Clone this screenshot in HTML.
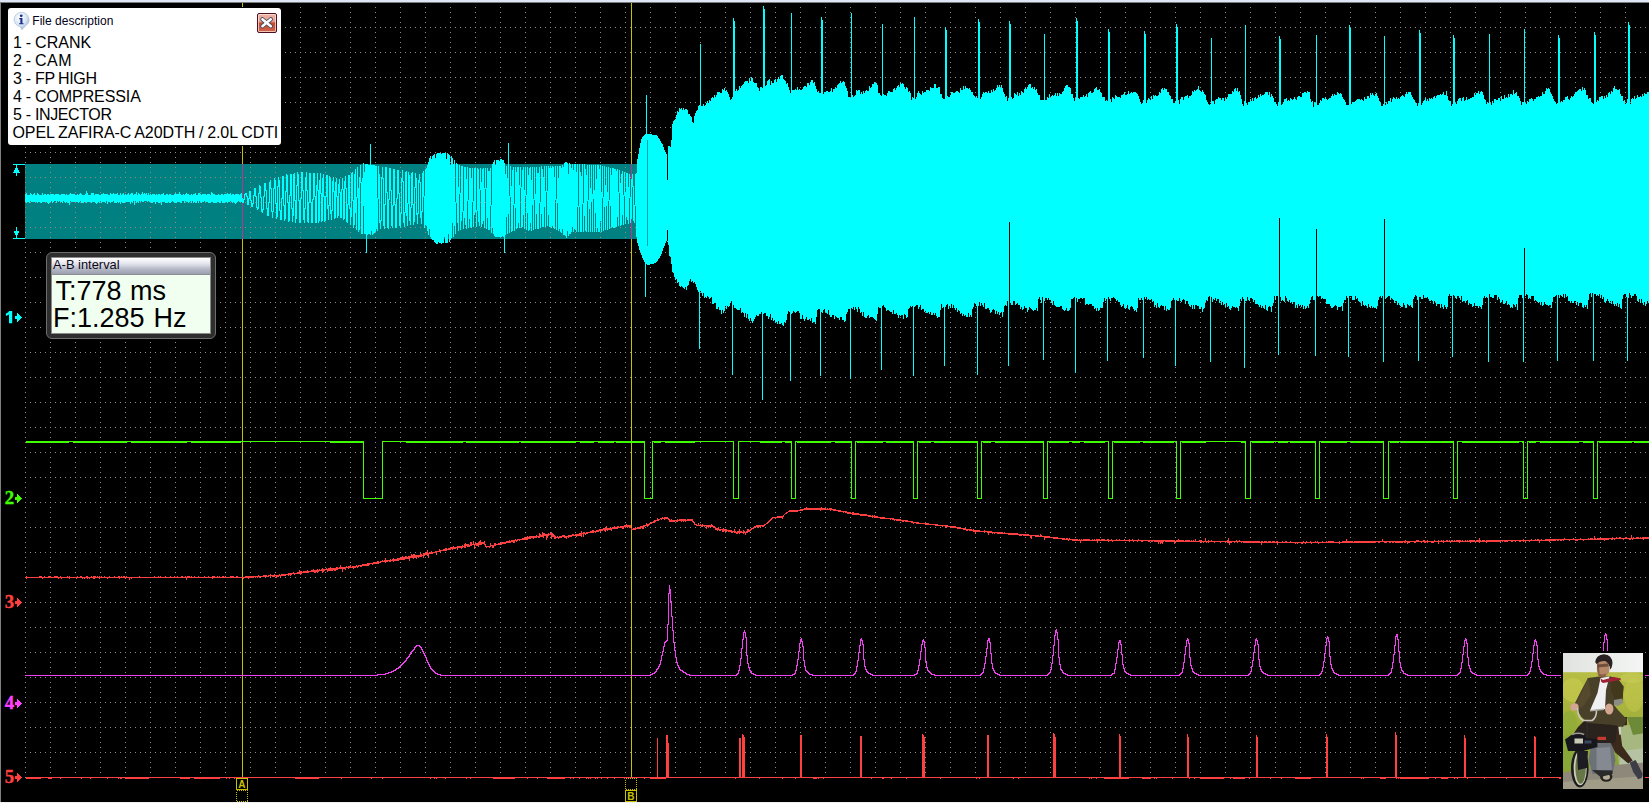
<!DOCTYPE html>
<html><head><meta charset="utf-8"><title>scope</title>
<style>
html,body{margin:0;padding:0;background:#000;}
body{width:1649px;height:803px;overflow:hidden;position:relative;font-family:"Liberation Sans",sans-serif;}
#plot{position:absolute;left:0;top:0;}
#desc{position:absolute;left:8px;top:8px;width:273px;height:137px;background:#fff;border-radius:3px;box-shadow:0 0 0 1px #000;}
#desc .ttl{position:absolute;left:24.3px;top:6px;font-size:12px;line-height:14px;color:#000018;letter-spacing:0.03px;white-space:nowrap;}
#desc .ln{position:absolute;left:5px;font-size:16px;line-height:18px;color:#000;white-space:nowrap;word-spacing:-0.55px;}
#close{position:absolute;left:249px;top:5px;width:18px;height:18px;border:1px solid #4a0f22;border-radius:2px;background:linear-gradient(#eeb4a6 0,#e59a89 46%,#c4492b 48%,#d2664d 100%);box-shadow:inset 0 0 0 1px rgba(255,225,215,.75);}
#ab{position:absolute;left:46px;top:252px;width:170px;height:87px;box-sizing:border-box;border-radius:6px;background:#2e2e2e;border:1px solid #6e6e6e;box-shadow:0 0 0 3px #000;}
#ab .in{position:absolute;left:4px;top:4px;width:160px;height:77px;border:1px solid #8a8a8a;box-sizing:border-box;background:#f0fff0;}
#ab .tb{position:absolute;left:0;top:0;width:158px;height:16px;background:linear-gradient(#ffffff 0,#e4e6ee 35%,#b4b8c6 70%,#9a9eae 100%);border-bottom:1px solid #8c8c94;font-size:12.9px;line-height:14px;color:#100818;text-indent:1px;white-space:nowrap;}
#ab .v{position:absolute;left:3px;font-size:27px;line-height:27px;color:#000;white-space:nowrap;}
</style></head><body>
<svg id="plot" width="1649" height="803" viewBox="0 0 1649 803" shape-rendering="crispEdges">
<defs>
<pattern id="g" x="0" y="2" width="25" height="25" patternUnits="userSpaceOnUse">
<path d="M0 0h1v1h-1zM5 0h1v1h-1zM10 0h1v1h-1zM15 0h1v1h-1zM20 0h1v1h-1zM0 5h1v1h-1zM0 10h1v1h-1zM0 15h1v1h-1zM0 20h1v1h-1z" fill="#8c8c8c"/>
</pattern>
<pattern id="g2" x="0" y="2" width="25" height="25" patternUnits="userSpaceOnUse">
<path d="M0 0h1v1h-1zM5 0h1v1h-1zM10 0h1v1h-1zM15 0h1v1h-1zM20 0h1v1h-1zM0 5h1v1h-1zM0 10h1v1h-1zM0 15h1v1h-1zM0 20h1v1h-1z" fill="#a08878"/>
</pattern>
</defs>
<rect width="1649" height="803" fill="#000"/>
<rect x="25" y="3" width="1624" height="775" fill="url(#g)"/>
<rect x="25" y="164" width="612" height="75" fill="#008080"/>
<rect x="25" y="164" width="612" height="75" fill="url(#g2)"/>
<!-- scale marker -->
<path d="M13 164h12v1h-12zM13 238h12v1h-12zM16 165h1v11h-1zM16 227h1v11h-1z" fill="#00ffff"/>
<path d="M16.5 166l3.5 6.5h-7zM16.5 237l3.5 -6.5h-7z" fill="#00ffff"/>
<!-- cursors -->
<rect x="242" y="3" width="1" height="775" fill="#c8c000"/>
<rect x="631" y="3" width="1" height="775" fill="#c8c000"/>
<rect x="242" y="164" width="1" height="75" fill="#c03090"/>
<rect x="631" y="164" width="1" height="75" fill="#c03090"/>
<!-- ch1 -->
<g transform="translate(0.5,0)"><path d="M25 194v8M26 193v10M27 195v7M28 195v7M29 195v8M30 193v8M31 194v8M32 195v7M33 194v8M34 193v9M35 195v7M36 195v7M37 193v10M38 194v8M39 195v7M40 195v8M41 195v8M42 193v9M43 195v7M44 194v8M45 194v8M46 195v7M47 194v9M48 194v10M49 195v8M50 194v8M51 194v7M52 194v9M53 194v8M54 195v6M55 194v7M56 194v9M57 194v7M58 194v8M59 195v6M60 195v7M61 194v8M62 194v9M63 194v7M64 194v8M65 195v8M66 194v8M67 195v8M68 195v8M69 194v11M70 193v8M71 194v8M72 194v8M73 194v8M74 194v8M75 195v7M76 195v7M77 194v8M78 195v8M79 194v8M80 193v8M81 194v9M82 195v8M83 195v8M84 195v7M85 194v8M86 191v12M87 193v9M88 195v7M89 195v7M90 195v7M91 193v10M92 193v9M93 193v9M94 195v7M95 194v9M96 194v10M97 194v9M98 194v8M99 195v8M100 195v6M101 194v9M102 194v8M103 193v9M104 194v8M105 194v9M106 194v7M107 194v10M108 195v7M109 195v7M110 193v10M111 194v8M112 194v8M113 193v8M114 194v9M115 194v9M116 194v9M117 193v9M118 195v8M119 195v7M120 193v11M121 195v7M122 194v9M123 193v10M124 195v8M125 194v8M126 195v7M127 194v8M128 193v9M129 195v7M130 194v10M131 193v9M132 193v10M133 195v6M134 194v11M135 194v7M136 192v11M137 195v7M138 193v10M139 194v7M140 195v7M141 194v7M142 192v10M143 194v8M144 193v8M145 194v7M146 193v8M147 195v7M148 193v8M149 195v7M150 194v8M151 195v8M152 194v9M153 194v8M154 194v8M155 195v9M156 194v8M157 195v7M158 194v9M159 194v9M160 195v7M161 194v11M162 194v8M163 193v9M164 195v7M165 195v8M166 194v9M167 194v9M168 195v7M169 194v9M170 194v9M171 195v7M172 195v6M173 195v7M174 194v9M175 193v10M176 194v9M177 194v8M178 194v8M179 192v10M180 194v9M181 195v8M182 195v6M183 194v7M184 195v8M185 194v7M186 193v9M187 194v8M188 194v9M189 195v7M190 195v6M191 194v9M192 195v6M193 194v9M194 194v8M195 193v10M196 195v8M197 195v6M198 193v10M199 193v8M200 194v8M201 195v8M202 194v8M203 194v8M204 194v7M205 194v8M206 195v7M207 194v8M208 194v9M209 194v9M210 195v8M211 192v10M212 193v9M213 194v9M214 194v9M215 195v8M216 195v8M217 195v7M218 194v8M219 195v8M220 195v8M221 194v7M222 194v9M223 195v8M224 194v9M225 194v8M226 194v8M227 193v10M228 194v8M229 194v8M230 193v8M231 195v7M232 194v9M233 194v8M234 195v8M235 194v10M236 194v9M237 194v8M238 194v7M239 195v7M240 194v8M241 193v9M242 198v5M243 199v4M244 194v6M245 193v2M246 193v4M247 196v9M248 198v7M249 191v8M250 191v10M251 200v7M252 203v4M253 195v9M254 188v8M255 188v9M256 196v12M257 207v3M258 193v16M259 185v9M260 186v12M261 197v15M262 209v4M263 196v14M264 183v14M265 183v8M266 190v19M267 208v8M268 202v14M269 182v21M270 180v9M271 188v24M272 211v7M273 188v24M274 178v11M275 180v24M276 203v16M277 186v31M278 177v10M279 180v31M280 210v10M281 198v22M282 176v23M283 176v30M284 205v16M285 191v28M286 174v18M287 175v28M288 202v20M289 195v26M290 174v22M291 174v35M292 208v14M293 174v42M294 173v28M295 200v23M296 185v34M297 172v14M298 174v27M299 200v23M300 198v25M301 172v27M302 172v19M303 190v30M304 208v15M305 177v32M306 172v19M307 190v32M308 202v21M309 173v30M310 173v30M311 202v21M312 199v24M313 173v27M314 173v24M315 196v27M316 185v38M317 173v18M318 190v33M319 180v41M320 173v21M321 193v29M322 178v43M323 174v23M324 196v26M325 196v25M326 175v22M327 175v34M328 205v15M329 176v30M330 178v36M331 210v10M332 181v30M333 177v15M334 191v28M335 182v36M336 178v19M337 196v22M338 184v32M339 179v14M340 192v26M341 189v29M342 178v12M343 189v31M344 181v38M345 176v13M346 188v34M347 204v19M348 175v30M349 175v34M350 208v17M351 173v44M352 172v29M353 200v28M354 174v51M355 169v44M356 197v33M357 167v31M358 188v44M359 177v53M360 165v18M361 182v52M362 178v56M363 163v43M364 172v62M365 164v70M366 164v89M367 164v71M368 165v69M369 165v69M370 144v91M371 165v66M372 165v70M373 165v69M374 165v68M375 166v66M376 166v63M377 198v33M378 166v33M379 174v49M380 220v9M381 177v44M382 167v12M383 178v48M384 204v25M385 167v38M386 167v26M387 192v36M388 199v30M389 168v32M390 168v23M391 190v36M392 205v23M393 169v37M394 169v36M395 204v24M396 198v30M397 170v29M398 170v24M399 193v33M400 213v15M401 178v36M402 170v12M403 181v42M404 212v15M405 172v41M406 171v45M407 203v23M408 172v32M409 175v46M410 207v18M411 173v35M412 172v33M413 204v21M414 187v35M415 173v15M416 178v37M417 213v11M418 180v34M419 174v9M420 182v36M421 211v13M422 173v39M423 171v26M424 196v32M425 169v56M426 168v58M427 165v66M428 162v73M429 158v71M430 156v81M431 159v80M432 156v84M433 155v85M434 154v88M435 158v85M436 154v90M437 153v91M438 153v89M439 153v90M440 153v90M441 154v90M442 153v90M443 153v90M444 153v84M445 153v90M446 159v84M447 153v90M448 154v80M449 155v87M450 165v75M451 156v82M452 158v65M453 164v73M454 160v66M455 202v32M456 163v40M457 164v59M458 187v44M459 165v29M460 193v37M461 166v55M462 166v46M463 211v18M464 167v51M465 167v58M466 179v50M467 167v34M468 200v28M469 168v51M470 168v59M471 178v50M472 168v34M473 201v26M474 168v47M475 168v44M476 210v17M477 168v43M478 169v53M479 189v37M480 168v22M481 182v45M482 169v55M483 168v53M484 188v40M485 168v21M486 188v41M487 168v50M488 171v59M489 171v59M490 168v38M491 205v28M492 164v64M493 162v72M494 160v76M495 165v72M496 160v77M497 160v77M498 160v77M499 161v76M500 159v78M501 159v78M502 160v76M503 160v77M504 163v90M505 174v61M506 166v51M507 178v56M508 143v71M509 196v37M510 166v31M511 186v46M512 170v61M513 167v38M514 204v27M515 167v41M516 172v57M517 167v61M518 167v56M519 185v43M520 167v21M521 187v41M522 170v57M523 167v48M524 190v39M525 167v29M526 195v35M527 167v46M528 175v56M529 168v62M530 167v56M531 180v51M532 167v38M533 199v31M534 167v33M535 194v35M536 167v47M537 173v56M538 173v56M539 167v36M540 202v26M541 166v48M542 169v58M543 177v50M544 166v41M545 191v36M546 166v26M547 191v35M548 166v49M549 168v59M550 166v61M551 168v60M552 166v60M553 167v61M554 177v52M555 166v34M556 199v31M557 166v37M558 178v53M559 166v63M560 166v66M561 168v65M562 165v64M563 167v68M564 163v72M565 162v74M566 162v76M567 163v68M568 174v62M569 163v71M570 164v70M571 168v64M572 164v63M573 170v62M574 164v65M575 164v66M576 172v60M577 164v43M578 206v26M579 164v43M580 172v60M581 176v56M582 164v40M583 203v29M584 164v52M585 169v62M586 175v57M587 165v36M588 200v32M589 165v44M590 188v44M591 165v37M592 194v38M593 165v34M594 190v42M595 165v48M596 179v53M597 165v63M598 165v67M599 169v63M600 165v56M601 192v40M602 166v32M603 197v34M604 166v41M605 185v45M606 167v39M607 192v38M608 167v34M609 200v29M610 168v38M611 175v53M612 168v59M613 168v60M614 169v59M615 169v58M616 171v56M617 169v48M618 192v34M619 170v23M620 183v43M621 174v51M622 171v44M623 195v30M624 172v24M625 192v32M626 173v44M627 173v47M628 187v37M629 174v24M630 197v26M631 179v40M632 174v13M633 186v35M634 205v18M635 174v32M636 173v64M637 159v84M638 154v92M639 148v102M640 143v109M641 139v116M642 137v121M643 136v124M644 135v127M645 134v163M646 95v169M647 134v131M648 134v131M649 134v131M650 134v130M651 134v130M652 135v129M653 135v129M654 135v128M655 135v128M656 135v127M657 136v125M658 138v121M659 139v119M660 141v115M661 143v111M662 144v107M663 147v101M664 150v96M665 152v91M666 154v87M667 148v94M668 146v99M669 146v110M670 147v110M671 140v124M672 124v148M673 121v152M674 120v157M675 119v161M676 115v164M677 111v172M678 112v170M679 108v178M680 109v178M681 108v178M682 110v177M683 108v180M684 110v179M685 109v178M686 109v181M687 110v176M688 114v171M689 114v167M690 116v163M691 117v165M692 122v159M693 123v160M694 116v166M695 113v171M696 111v176M697 110v180M698 106v186M699 105v244M700 44v247M701 106v187M702 106v190M703 104v189M704 106v192M705 105v192M706 103v195M707 101v195M708 103v194M709 100v199M710 101v197M711 98v199M712 97v207M713 98v206M714 95v208M715 97v206M716 95v214M717 92v217M718 92v215M719 92v218M720 93v217M721 93v221M722 89v221M723 90v223M724 88v223M725 91v215M726 90v219M727 92v214M728 94v213M729 97v209M730 100v203M731 99v202M732 97v278M733 18v287M734 21v287M735 91v217M736 89v220M737 91v219M738 90v220M739 86v224M740 88v220M741 86v227M742 85v227M743 84v229M744 82v235M745 81v232M746 81v237M747 81v233M748 83v236M749 78v243M750 81v237M751 77v244M752 78v245M753 82v239M754 83v236M755 83v234M756 83v232M757 87v229M758 88v228M759 91v223M760 87v227M761 87v225M762 88v312M763 6v308M764 9v304M765 86v227M766 85v231M767 81v235M768 80v239M769 79v238M770 85v229M771 81v239M772 83v235M773 83v238M774 80v240M775 79v244M776 82v240M777 79v245M778 77v244M779 79v245M780 76v248M781 75v248M782 75v250M783 79v247M784 80v242M785 81v242M786 84v236M787 83v231M788 87v224M789 90v222M790 93v288M791 13v301M792 90v223M793 90v221M794 90v222M795 89v224M796 90v222M797 87v224M798 90v221M799 89v224M800 90v229M801 90v229M802 89v226M803 87v232M804 86v235M805 86v233M806 87v230M807 83v237M808 83v237M809 85v234M810 82v239M811 80v238M812 80v243M813 83v239M814 82v240M815 86v238M816 89v228M817 92v218M818 91v218M819 93v216M820 93v283M821 17v295M822 20v293M823 94v216M824 92v217M825 92v220M826 91v222M827 91v223M828 92v218M829 92v223M830 91v226M831 88v229M832 92v223M833 89v226M834 89v230M835 87v229M836 88v229M837 85v233M838 84v234M839 83v237M840 81v236M841 83v234M842 82v238M843 81v239M844 82v240M845 86v235M846 88v226M847 91v221M848 97v212M849 97v212M850 98v281M851 13v295M852 95v214M853 97v210M854 96v214M855 95v212M856 90v219M857 91v221M858 90v217M859 90v219M860 94v219M861 92v220M862 94v222M863 91v221M864 93v224M865 91v227M866 90v228M867 91v225M868 91v224M869 86v232M870 88v229M871 87v230M872 84v233M873 84v234M874 82v237M875 83v237M876 83v238M877 85v229M878 93v214M879 93v215M880 95v213M881 96v274M882 24v282M883 94v211M884 95v212M885 95v213M886 96v215M887 93v217M888 91v219M889 91v220M890 92v220M891 92v220M892 92v222M893 89v221M894 88v226M895 90v224M896 88v225M897 86v229M898 85v233M899 87v228M900 83v233M901 84v231M902 83v232M903 84v235M904 87v227M905 89v226M906 87v231M907 88v229M908 92v217M909 91v217M910 93v213M911 100v207M912 97v209M913 98v278M914 17v290M915 99v207M916 97v208M917 93v212M918 91v218M919 93v214M920 94v211M921 95v215M922 91v218M923 93v216M924 92v220M925 92v219M926 90v223M927 90v223M928 90v222M929 91v223M930 87v225M931 88v227M932 88v227M933 88v225M934 84v231M935 84v229M936 88v228M937 88v230M938 87v230M939 87v230M940 94v216M941 94v210M942 98v210M943 99v208M944 99v267M945 27v280M946 30v275M947 96v208M948 97v212M949 97v209M950 95v213M951 92v212M952 92v216M953 93v212M954 93v215M955 92v218M956 91v217M957 91v221M958 92v218M959 93v218M960 88v226M961 90v223M962 90v226M963 86v228M964 89v227M965 86v229M966 88v229M967 88v229M968 89v224M969 88v229M970 90v225M971 92v225M972 92v217M973 95v212M974 96v207M975 98v206M976 96v210M977 98v277M978 19v287M979 22v280M980 99v207M981 97v206M982 94v211M983 92v215M984 93v210M985 92v217M986 92v217M987 93v215M988 91v217M989 93v217M990 93v220M991 90v222M992 92v218M993 89v220M994 91v219M995 90v224M996 88v223M997 85v229M998 87v225M999 85v230M1000 88v225M1001 85v227M1002 88v229M1003 92v220M1004 94v212M1005 97v208M1006 96v210M1007 101v200M1008 98v268M1009 21v280M1010 24v279M1011 97v208M1012 99v206M1013 98v203M1014 93v208M1015 94v211M1016 95v209M1017 92v211M1018 96v209M1019 93v212M1020 95v214M1021 91v216M1022 92v218M1023 93v216M1024 89v217M1025 88v220M1026 89v219M1027 87v225M1028 85v225M1029 84v223M1030 84v224M1031 88v221M1032 87v223M1033 89v222M1034 87v223M1035 90v220M1036 89v219M1037 93v218M1038 95v204M1039 95v202M1040 100v200M1041 100v203M1042 100v197M1043 100v260M1044 34v267M1045 100v198M1046 100v198M1047 97v203M1048 98v200M1049 94v206M1050 98v202M1051 96v207M1052 95v210M1053 96v205M1054 95v210M1055 93v213M1056 96v211M1057 93v214M1058 96v211M1059 93v214M1060 94v212M1061 94v212M1062 92v217M1063 91v219M1064 88v223M1065 86v224M1066 85v223M1067 85v226M1068 87v224M1069 87v223M1070 88v220M1071 94v205M1072 94v205M1073 98v200M1074 101v196M1075 98v275M1076 18v280M1077 21v281M1078 98v201M1079 99v200M1080 97v201M1081 97v201M1082 97v202M1083 95v203M1084 97v201M1085 96v209M1086 94v210M1087 97v207M1088 93v212M1089 92v212M1090 91v213M1091 93v211M1092 93v213M1093 92v214M1094 89v220M1095 88v220M1096 87v224M1097 90v218M1098 90v221M1099 89v221M1100 92v215M1101 93v215M1102 97v211M1103 97v205M1104 97v201M1105 101v200M1106 100v199M1107 101v260M1108 29v268M1109 32v267M1110 99v202M1111 102v196M1112 97v201M1113 98v199M1114 99v199M1115 95v204M1116 96v205M1117 97v203M1118 97v205M1119 97v205M1120 98v207M1121 95v212M1122 95v211M1123 94v210M1124 92v216M1125 95v214M1126 95v213M1127 94v211M1128 91v218M1129 94v216M1130 93v214M1131 92v214M1132 93v214M1133 92v217M1134 92v219M1135 92v218M1136 93v219M1137 94v214M1138 96v202M1139 99v201M1140 102v198M1141 104v194M1142 103v197M1143 100v258M1144 31v266M1145 34v265M1146 103v194M1147 100v200M1148 98v201M1149 99v201M1150 100v200M1151 96v203M1152 99v203M1153 95v206M1154 96v211M1155 95v210M1156 96v212M1157 96v207M1158 95v212M1159 92v216M1160 93v213M1161 89v216M1162 88v218M1163 90v216M1164 88v222M1165 89v217M1166 89v222M1167 92v217M1168 92v218M1169 95v215M1170 96v212M1171 99v202M1172 99v201M1173 103v195M1174 103v197M1175 101v265M1176 24v276M1177 27v274M1178 100v201M1179 104v194M1180 99v202M1181 97v205M1182 97v203M1183 100v199M1184 97v203M1185 96v208M1186 96v205M1187 95v206M1188 98v206M1189 96v210M1190 96v211M1191 95v210M1192 91v218M1193 92v213M1194 90v219M1195 91v214M1196 90v215M1197 89v217M1198 86v220M1199 90v219M1200 91v218M1201 92v215M1202 90v222M1203 92v217M1204 94v214M1205 95v207M1206 100v200M1207 102v199M1208 104v193M1209 105v191M1210 104v258M1211 38v259M1212 101v201M1213 101v198M1214 104v196M1215 100v198M1216 99v202M1217 99v200M1218 97v202M1219 98v205M1220 98v203M1221 100v205M1222 98v204M1223 98v207M1224 101v203M1225 98v209M1226 99v204M1227 97v210M1228 94v212M1229 94v215M1230 94v216M1231 94v214M1232 91v215M1233 92v215M1234 89v218M1235 88v220M1236 91v216M1237 88v220M1238 92v219M1239 91v215M1240 95v204M1241 99v202M1242 104v193M1243 106v193M1244 101v267M1245 25v276M1246 103v198M1247 105v192M1248 102v198M1249 102v199M1250 99v199M1251 101v197M1252 98v201M1253 101v201M1254 98v202M1255 97v207M1256 99v205M1257 98v206M1258 95v210M1259 97v210M1260 94v211M1261 96v212M1262 95v211M1263 95v213M1264 94v215M1265 92v213M1266 92v218M1267 92v219M1268 95v212M1269 92v214M1270 97v210M1271 94v218M1272 96v210M1273 98v205M1274 102v194M1275 102v198M1276 104v192M1277 106v190M1278 102v253M1279 36v260M1280 39v258M1281 105v196M1282 104v196M1283 102v199M1284 99v203M1285 99v197M1286 98v200M1287 101v200M1288 100v202M1289 101v199M1290 98v205M1291 99v203M1292 100v204M1293 99v203M1294 97v205M1295 99v209M1296 100v205M1297 97v211M1298 96v208M1299 96v210M1300 97v208M1301 97v210M1302 93v212M1303 93v216M1304 92v214M1305 92v217M1306 93v215M1307 91v215M1308 92v216M1309 92v212M1310 99v201M1311 102v195M1312 101v195M1313 107v193M1314 102v198M1315 103v253M1316 35v262M1317 105v191M1318 105v192M1319 103v193M1320 100v196M1321 101v198M1322 98v200M1323 98v201M1324 99v200M1325 97v202M1326 99v205M1327 100v204M1328 99v205M1329 98v206M1330 98v208M1331 96v212M1332 94v214M1333 96v211M1334 94v212M1335 95v210M1336 95v211M1337 92v218M1338 93v214M1339 94v213M1340 93v214M1341 94v212M1342 97v214M1343 99v204M1344 100v200M1345 102v198M1346 105v191M1347 105v193M1348 105v252M1349 25v271M1350 28v268M1351 104v192M1352 102v198M1353 102v198M1354 102v198M1355 101v195M1356 100v199M1357 99v199M1358 99v202M1359 99v203M1360 100v202M1361 99v207M1362 100v201M1363 101v204M1364 97v209M1365 99v206M1366 99v207M1367 96v212M1368 96v208M1369 98v209M1370 93v215M1371 95v211M1372 93v215M1373 95v212M1374 96v212M1375 94v214M1376 93v216M1377 96v210M1378 98v202M1379 101v196M1380 103v193M1381 106v192M1382 106v190M1383 104v258M1384 36v261M1385 105v194M1386 102v196M1387 104v193M1388 101v195M1389 101v195M1390 98v202M1391 102v196M1392 99v200M1393 97v203M1394 98v205M1395 99v202M1396 97v204M1397 99v206M1398 98v205M1399 99v206M1400 97v209M1401 96v211M1402 95v212M1403 96v207M1404 97v208M1405 94v214M1406 92v216M1407 94v210M1408 92v213M1409 92v214M1410 92v213M1411 95v212M1412 97v211M1413 99v200M1414 100v197M1415 103v192M1416 103v193M1417 106v194M1418 103v258M1419 30v267M1420 33v264M1421 105v194M1422 103v196M1423 101v194M1424 100v198M1425 98v199M1426 101v197M1427 99v198M1428 101v198M1429 98v203M1430 99v202M1431 98v202M1432 99v202M1433 97v207M1434 96v205M1435 98v204M1436 96v210M1437 95v209M1438 95v209M1439 95v209M1440 94v214M1441 95v209M1442 94v213M1443 92v217M1444 95v210M1445 95v212M1446 91v218M1447 96v211M1448 100v196M1449 101v193M1450 101v195M1451 106v190M1452 104v253M1453 35v260M1454 38v258M1455 103v195M1456 104v195M1457 101v195M1458 99v197M1459 98v200M1460 98v202M1461 101v195M1462 98v204M1463 97v204M1464 101v200M1465 100v203M1466 97v204M1467 100v200M1468 99v206M1469 99v204M1470 98v206M1471 98v206M1472 97v210M1473 97v209M1474 93v210M1475 95v211M1476 93v213M1477 93v213M1478 91v217M1479 94v212M1480 92v215M1481 91v218M1482 92v213M1483 95v203M1484 99v197M1485 100v198M1486 104v193M1487 102v196M1488 103v259M1489 34v260M1490 103v194M1491 105v192M1492 101v197M1493 103v195M1494 99v196M1495 99v196M1496 100v195M1497 100v200M1498 98v199M1499 98v201M1500 101v202M1501 96v206M1502 99v201M1503 99v205M1504 95v209M1505 98v205M1506 97v204M1507 98v207M1508 94v210M1509 97v208M1510 94v214M1511 94v213M1512 95v213M1513 90v214M1514 94v211M1515 93v214M1516 92v212M1517 96v214M1518 96v202M1519 98v197M1520 101v194M1521 105v190M1522 102v196M1523 102v260M1524 29v267M1525 103v193M1526 104v190M1527 101v194M1528 102v197M1529 99v199M1530 99v200M1531 98v198M1532 99v197M1533 101v195M1534 99v202M1535 99v201M1536 97v204M1537 97v205M1538 96v207M1539 97v205M1540 96v209M1541 96v206M1542 92v214M1543 94v211M1544 94v208M1545 91v213M1546 88v217M1547 89v216M1548 88v218M1549 89v216M1550 93v212M1551 94v214M1552 96v206M1553 99v198M1554 101v196M1555 102v194M1556 104v191M1557 103v258M1558 35v260M1559 38v260M1560 103v192M1561 101v195M1562 102v195M1563 100v194M1564 100v198M1565 97v197M1566 97v200M1567 96v200M1568 99v202M1569 100v201M1570 98v205M1571 96v205M1572 97v206M1573 96v207M1574 94v207M1575 92v209M1576 92v213M1577 91v211M1578 90v216M1579 89v214M1580 89v213M1581 91v212M1582 87v220M1583 90v218M1584 88v217M1585 90v217M1586 95v210M1587 95v214M1588 99v201M1589 98v196M1590 98v195M1591 102v195M1592 103v190M1593 104v257M1594 32v262M1595 35v259M1596 102v194M1597 100v195M1598 101v195M1599 97v197M1600 97v201M1601 96v199M1602 96v203M1603 99v198M1604 96v206M1605 98v205M1606 95v206M1607 97v202M1608 93v208M1609 92v211M1610 94v207M1611 91v213M1612 92v209M1613 88v216M1614 86v220M1615 89v215M1616 89v217M1617 90v213M1618 90v217M1619 89v215M1620 94v214M1621 96v213M1622 96v203M1623 101v194M1624 100v194M1625 104v190M1626 103v194M1627 99v262M1628 22v276M1629 25v268M1630 104v191M1631 99v199M1632 98v198M1633 99v197M1634 96v198M1635 99v195M1636 98v198M1637 95v206M1638 97v205M1639 97v202M1640 96v207M1641 97v202M1642 94v209M1643 96v209M1644 93v209M1645 94v212M1646 94v210M1647 92v209M1648 92v211" stroke="#00ffff" stroke-width="1" fill="none"/>
<path d="M667 230V241M1009 222V305M1279 218V300M1316 229V300M1384 219V300M1524 248V300M667 147V180" stroke="#000" stroke-width="1" fill="none"/><path d="M647 140V246" stroke="#00a4a4" stroke-width="1" fill="none"/></g>
<g transform="translate(0.5,0.5)" fill="none" stroke-width="1">
<path d="M25 441H363V498H382V441H644V498H652V441H733V498H738V441H791V498H795V441H851V498H855V441H913V498H917V441H977V498H981V441H1043V498H1047V441H1108V498H1112V441H1176V498H1180V441H1245V498H1250V441H1315V498H1319V441H1383V498H1388V441H1453V498H1457V441H1523V498H1527V441H1593V498H1597V441H1649M25 442H68M72 442H126M130 442H186M190 442H240M329 442H362M405 442H462M465 442H518M520 442H575M579 442H593M597 442H613M615 442H643M653 442H660M664 442H694M759 442H781M784 442H790M796 442H830M834 442H850M856 442H882M885 442H912M918 442H930M933 442H976M982 442H990M994 442H1042M1048 442H1068M1071 442H1079M1083 442H1104M1113 442H1139M1142 442H1173M1175 442H1175M1181 442H1205M1240 442H1244M1251 442H1273M1277 442H1287M1289 442H1314M1320 442H1346M1350 442H1382M1389 442H1398M1400 442H1452M1458 442H1458M1461 442H1518M1521 442H1522M1528 442H1535M1539 442H1578M1582 442H1592M1598 442H1631M1633 442H1648" stroke="#40ff00"/>
<path d="M25 777H1649M657 737V777M666 734V777M667 734V777M668 742V777M739 737V777M740 737V777M742 733V777M743 734V777M744 736V777M800 734V777M801 734V777M860 735V777M861 735V777M922 733V777M923 734V777M924 736V777M987 734V777M988 734V777M1053 732V777M1054 733V777M1055 736V777M1119 733V777M1120 735V777M1187 733V777M1188 736V777M1256 734V777M1257 736V777M1326 733V777M1327 736V777M1395 731V777M1396 734V777M1464 734V777M1465 737V777M1534 735V777M1535 736V777M1605 734V777M25 778H39M47 778H51M124 778H148M179 778H189M193 778H219M294 778H318M492 778H514M546 778H564M649 778H665M812 778H816M1103 778H1128M1141 778H1150M1199 778H1223M1232 778H1244M1295 778H1310M1379 778H1383M1399 778H1428M1440 778H1447M1558 778H1579M38 777v1.2M40 777v1.2M60 777v1.2M81 777v1.2M90 777v1.2M107 777v1.2M118 777v1.2M120 777v1.2M121 777v1.2M139 777v1.2M141 777v1.2M201 777v1.2M212 777v1.2M213 777v1.2M226 777v1.2M229 777v1.2M234 777v1.2M296 777v1.2M341 777v1.2M371 777v1.2M382 777v1.2M430 777v1.2M434 777v1.2M436 777v1.2M445 777v1.2M466 777v1.2M470 777v1.2M499 777v1.2M527 777v1.2M537 777v1.2M552 777v1.2M553 777v1.2M556 777v1.2M558 777v1.2M570 777v1.2M573 777v1.2M579 777v1.2M586 777v1.2M588 777v1.2M590 777v1.2M595 777v1.2M597 777v1.2M601 777v1.2M607 777v1.2M614 777v1.2M624 777v1.2M644 777v1.2M735 777v1.2M759 777v1.2M782 777v1.2M795 777v1.2M818 777v1.2M823 777v1.2M871 777v1.2M882 777v1.2M883 777v1.2M891 777v1.2M906 777v1.2M940 777v1.2M976 777v1.2M979 777v1.2M1013 777v1.2M1018 777v1.2M1089 777v1.2M1091 777v1.2M1096 777v1.2M1123 777v1.2M1154 777v1.2M1156 777v1.2M1172 777v1.2M1189 777v1.2M1194 777v1.2M1210 777v1.2M1230 777v1.2M1249 777v1.2M1270 777v1.2M1281 777v1.2M1295 777v1.2M1298 777v1.2M1299 777v1.2M1361 777v1.2M1363 777v1.2M1384 777v1.2M1385 777v1.2M1396 777v1.2M1398 777v1.2M1406 777v1.2M1423 777v1.2M1435 777v1.2M1445 777v1.2M1454 777v1.2M1457 777v1.2M1467 777v1.2M1484 777v1.2M1506 777v1.2M1542 777v1.2M1569 777v1.2M1572 777v1.2M1574 777v1.2" stroke="#ff4040"/>
</g>
<g transform="translate(0.5,0)"><path d="M25 577V578M26 576V579M27 577V578M28 577V578M29 577V578M30 577V578M31 577V578M32 577V578M33 577V578M34 577V578M35 577V578M36 577V578M37 577V578M38 577V578M39 576V578M40 576V578M41 576V578M42 577V579M43 577V578M44 576V578M45 577V578M46 577V578M47 577V578M48 576V578M49 576V578M50 576V578M51 577V578M52 577V578M53 577V578M54 576V578M55 576V578M56 576V578M57 576V578M58 577V579M59 577V578M60 576V578M61 577V579M62 577V578M63 577V578M64 577V578M65 577V578M66 577V578M67 576V578M68 577V578M69 576V579M70 577V578M71 577V578M72 577V578M73 577V578M74 577V578M75 577V578M76 577V579M77 576V578M78 577V578M79 577V578M80 576V578M81 576V578M82 577V579M83 577V578M84 577V579M85 577V578M86 576V578M87 576V579M88 577V578M89 577V579M90 577V578M91 576V578M92 577V578M93 576V579M94 576V579M95 576V578M96 577V578M97 576V578M98 577V578M99 576V579M100 577V578M101 576V578M102 577V578M103 577V578M104 576V578M105 577V578M106 577V578M107 577V579M108 577V578M109 576V578M110 577V578M111 577V578M112 577V578M113 577V578M114 576V578M115 577V578M116 577V578M117 577V578M118 576V578M119 576V579M120 577V578M121 576V578M122 577V578M123 576V578M124 576V578M125 577V579M126 576V578M127 577V578M128 577V578M129 577V580M130 577V578M131 577V579M132 577V578M133 577V578M134 577V578M135 577V578M136 577V578M137 577V578M138 577V578M139 576V578M140 577V578M141 577V578M142 577V578M143 577V578M144 577V578M145 577V578M146 577V578M147 577V578M148 577V578M149 577V578M150 577V578M151 577V578M152 577V578M153 577V578M154 576V578M155 577V578M156 577V578M157 577V578M158 576V578M159 577V578M160 576V578M161 577V578M162 577V578M163 577V578M164 577V578M165 576V578M166 577V578M167 577V578M168 577V578M169 577V578M170 576V578M171 577V578M172 577V578M173 577V578M174 576V578M175 577V578M176 577V578M177 576V578M178 577V578M179 577V578M180 577V578M181 576V578M182 576V578M183 577V578M184 577V578M185 576V578M186 577V580M187 576V578M188 576V578M189 576V578M190 577V578M191 576V578M192 577V578M193 577V578M194 576V578M195 577V578M196 577V578M197 577V578M198 576V578M199 577V578M200 577V578M201 577V578M202 577V578M203 577V578M204 576V578M205 577V578M206 577V578M207 577V578M208 576V578M209 577V578M210 577V578M211 577V578M212 576V579M213 576V578M214 576V578M215 577V578M216 577V578M217 576V578M218 577V578M219 576V578M220 577V578M221 577V578M222 576V578M223 576V578M224 577V578M225 576V578M226 577V578M227 577V578M228 577V578M229 577V578M230 576V578M231 576V578M232 576V578M233 576V578M234 577V578M235 577V578M236 576V578M237 576V578M238 577V578M239 577V578M240 577V578M241 577V578M242 577V578M243 577V579M244 577V578M245 576V578M246 576V578M247 576V578M248 576V579M249 576V578M250 576V578M251 576V578M252 576V578M253 576V578M254 576V577M255 576V578M256 576V577M257 576V578M258 575V577M259 576V578M260 576V577M261 576V577M262 576V577M263 575V577M264 575V577M265 575V577M266 575V577M267 576V577M268 575V577M269 575V576M270 574V577M271 575V576M272 575V577M273 575V577M274 574V577M275 575V576M276 575V578M277 575V577M278 575V577M279 574V576M280 575V577M281 574V576M282 574V576M283 574V576M284 574V576M285 574V576M286 574V575M287 574V575M288 573V576M289 573V575M290 573V576M291 573V575M292 573V574M293 572V574M294 573V575M295 573V574M296 573V574M297 572V574M298 572V574M299 570V574M300 571V575M301 571V574M302 572V573M303 571V573M304 571V573M305 571V573M306 571V573M307 570V573M308 571V573M309 571V572M310 571V572M311 570V572M312 570V572M313 569V572M314 570V573M315 570V573M316 570V572M317 569V573M318 570V572M319 569V571M320 570V571M321 569V571M322 568V573M323 569V572M324 569V571M325 569V570M326 568V570M327 569V572M328 568V571M329 568V571M330 567V571M331 568V571M332 568V571M333 568V570M334 568V571M335 568V571M336 567V570M337 567V570M338 568V569M339 567V569M340 565V569M341 567V569M342 567V572M343 567V569M344 567V569M345 567V570M346 566V568M347 567V568M348 566V569M349 566V568M350 565V568M351 567V568M352 566V568M353 566V569M354 566V568M355 566V568M356 565V567M357 566V568M358 565V567M359 565V566M360 565V567M361 565V567M362 564V566M363 564V566M364 564V566M365 564V566M366 564V566M367 563V566M368 563V566M369 563V565M370 563V564M371 563V564M372 563V565M373 562V564M374 562V564M375 562V564M376 562V564M377 561V564M378 561V564M379 562V563M380 561V563M381 561V562M382 560V562M383 561V562M384 560V562M385 558V563M386 560V562M387 560V562M388 560V561M389 560V562M390 559V562M391 560V561M392 559V561M393 558V562M394 559V561M395 559V561M396 559V561M397 558V561M398 558V561M399 558V560M400 558V560M401 557V560M402 556V560M403 557V560M404 557V560M405 556V559M406 556V559M407 557V559M408 556V559M409 556V561M410 556V558M411 554V558M412 555V558M413 554V559M414 554V558M415 555V558M416 555V559M417 555V557M418 555V558M419 555V557M420 553V557M421 554V557M422 555V556M423 553V558M424 553V556M425 553V555M426 552V555M427 550V556M428 553V558M429 552V554M430 552V554M431 551V554M432 552V554M433 552V553M434 552V553M435 551V553M436 551V555M437 551V552M438 551V552M439 549V552M440 550V552M441 550V551M442 550V551M443 549V551M444 549V551M445 548V551M446 548V551M447 549V550M448 548V550M449 548V550M450 547V550M451 547V549M452 547V550M453 546V549M454 547V549M455 547V549M456 547V548M457 546V550M458 546V548M459 546V548M460 546V548M461 546V549M462 545V548M463 546V547M464 544V548M465 543V548M466 544V546M467 544V547M468 544V547M469 545V547M470 542V546M471 542V546M472 544V545M473 541V545M474 544V549M475 542V545M476 543V546M477 543V546M478 542V547M479 541V545M480 540V545M481 542V545M482 542V544M483 542V544M484 541V545M485 544V547M486 546V548M487 546V547M488 546V547M489 546V548M490 543V547M491 545V546M492 545V548M493 545V548M494 543V546M495 543V546M496 544V545M497 544V545M498 543V545M499 543V545M500 543V545M501 542V545M502 542V544M503 542V544M504 542V544M505 542V544M506 541V543M507 541V543M508 541V543M509 540V543M510 541V543M511 540V542M512 540V542M513 540V543M514 540V543M515 539V541M516 540V542M517 539V541M518 539V540M519 539V541M520 539V540M521 539V540M522 538V540M523 538V540M524 537V540M525 538V540M526 537V540M527 536V540M528 537V539M529 536V539M530 536V539M531 536V538M532 536V538M533 536V539M534 536V538M535 536V538M536 535V538M537 536V537M538 536V538M539 533V538M540 534V537M541 535V537M542 532V537M543 533V538M544 533V536M545 534V536M546 534V540M547 534V538M548 533V536M549 534V535M550 533V535M551 532V539M552 533V537M553 534V537M554 535V539M555 536V539M556 537V538M557 536V538M558 537V539M559 536V538M560 536V538M561 536V538M562 535V537M563 535V537M564 535V538M565 536V538M566 536V539M567 536V537M568 535V538M569 535V537M570 535V537M571 535V537M572 534V536M573 534V536M574 535V536M575 534V536M576 534V537M577 534V536M578 534V536M579 533V536M580 533V536M581 531V537M582 533V534M583 532V537M584 532V534M585 533V535M586 532V534M587 532V534M588 532V533M589 532V533M590 531V533M591 531V533M592 530V533M593 530V533M594 531V532M595 531V533M596 530V532M597 530V532M598 530V532M599 529V531M600 529V532M601 529V531M602 529V531M603 528V530M604 528V531M605 528V532M606 526V530M607 528V531M608 528V530M609 528V530M610 528V530M611 528V531M612 527V529M613 527V529M614 526V529M615 527V529M616 527V529M617 526V529M618 526V528M619 527V528M620 526V528M621 526V528M622 526V529M623 526V529M624 525V527M625 525V528M626 524V527M627 525V528M628 525V527M629 525V528M630 525V528M631 528V530M632 529V530M633 528V530M634 528V530M635 528V530M636 528V529M637 527V529M638 527V529M639 527V529M640 526V529M641 526V528M642 526V529M643 525V529M644 525V527M645 525V526M646 523V526M647 524V527M648 524V526M649 523V525M650 523V524M651 522V524M652 522V523M653 521V523M654 520V523M655 520V522M656 520V521M657 518V521M658 519V521M659 519V520M660 518V519M661 518V520M662 517V519M663 518V519M664 517V520M665 517V519M666 517V519M667 517V519M668 518V520M669 519V522M670 520V522M671 519V522M672 520V522M673 520V522M674 520V522M675 520V521M676 520V522M677 519V522M678 520V521M679 519V521M680 519V521M681 519V522M682 519V521M683 519V522M684 519V521M685 519V522M686 520V521M687 519V521M688 519V521M689 519V521M690 519V521M691 519V521M692 519V522M693 521V523M694 522V525M695 524V525M696 524V526M697 525V526M698 523V526M699 525V526M700 524V526M701 525V527M702 524V527M703 525V526M704 525V527M705 525V526M706 525V529M707 525V527M708 525V528M709 525V527M710 525V527M711 524V527M712 525V527M713 526V528M714 526V528M715 527V530M716 528V530M717 528V531M718 527V530M719 529V531M720 529V531M721 529V530M722 529V532M723 528V532M724 529V531M725 529V532M726 529V532M727 530V531M728 530V532M729 530V532M730 530V532M731 530V533M732 531V533M733 531V532M734 529V533M735 531V533M736 532V534M737 531V534M738 531V533M739 529V534M740 531V533M741 531V533M742 532V533M743 530V534M744 531V533M745 532V535M746 531V533M747 529V533M748 529V532M749 530V532M750 529V531M751 528V530M752 528V529M753 527V529M754 526V528M755 526V527M756 525V527M757 525V528M758 525V528M759 525V527M760 525V527M761 525V526M762 525V527M763 525V527M764 524V526M765 524V525M766 523V524M767 522V524M768 521V523M769 520V522M770 519V521M771 518V520M772 517V519M773 517V518M774 517V518M775 517V519M776 517V518M777 516V518M778 516V518M779 516V518M780 516V518M781 516V518M782 516V519M783 515V517M784 514V515M785 513V514M786 512V514M787 512V513M788 511V512M789 510V512M790 510V512M791 510V512M792 510V512M793 510V512M794 510V512M795 510V512M796 510V512M797 510V512M798 510V511M799 510V511M800 509V511M801 509V511M802 509V511M803 509V510M804 508V510M805 508V510M806 507V510M807 508V510M808 508V510M809 508V510M810 508V510M811 508V510M812 508V510M813 508V510M814 508V510M815 508V510M816 508V510M817 508V510M818 508V510M819 508V510M820 508V511M821 507V510M822 508V510M823 508V510M824 508V510M825 508V510M826 509V510M827 508V510M828 509V510M829 508V510M830 508V511M831 508V510M832 509V510M833 509V511M834 509V511M835 509V511M836 510V511M837 510V511M838 510V512M839 510V512M840 510V512M841 511V512M842 511V512M843 511V513M844 511V512M845 511V513M846 511V513M847 512V514M848 512V514M849 512V514M850 512V514M851 513V514M852 512V515M853 512V515M854 513V515M855 513V515M856 513V515M857 513V515M858 513V515M859 514V515M860 514V516M861 514V516M862 514V516M863 514V516M864 514V516M865 514V516M866 514V516M867 515V516M868 515V517M869 515V517M870 515V517M871 516V517M872 515V518M873 516V517M874 515V518M875 516V518M876 516V518M877 516V518M878 517V518M879 517V518M880 517V519M881 517V519M882 517V519M883 517V519M884 517V519M885 518V519M886 518V519M887 518V519M888 518V519M889 518V519M890 518V520M891 518V519M892 518V520M893 518V520M894 519V521M895 519V520M896 519V521M897 519V521M898 519V521M899 519V521M900 519V521M901 520V521M902 520V522M903 520V522M904 520V521M905 520V522M906 520V522M907 520V522M908 521V522M909 521V522M910 521V522M911 521V523M912 521V523M913 522V524M914 522V523M915 522V523M916 522V524M917 522V524M918 522V524M919 523V524M920 523V524M921 523V524M922 523V524M923 523V524M924 523V524M925 523V525M926 523V525M927 523V525M928 523V525M929 524V525M930 524V525M931 524V525M932 524V525M933 524V525M934 524V525M935 524V526M936 524V526M937 524V526M938 525V526M939 525V526M940 525V526M941 525V526M942 525V527M943 525V526M944 525V526M945 525V527M946 525V528M947 525V527M948 526V527M949 526V527M950 526V527M951 526V528M952 526V528M953 526V528M954 526V528M955 526V528M956 527V528M957 527V529M958 527V529M959 527V529M960 528V529M961 528V529M962 528V529M963 528V530M964 528V530M965 528V530M966 529V531M967 529V531M968 529V530M969 529V531M970 529V531M971 529V531M972 530V531M973 529V532M974 530V532M975 530V534M976 530V532M977 530V532M978 530V532M979 530V532M980 531V532M981 531V532M982 531V532M983 531V532M984 530V533M985 531V532M986 531V532M987 531V533M988 531V535M989 531V533M990 531V533M991 531V533M992 532V534M993 532V533M994 532V534M995 532V533M996 532V533M997 532V534M998 532V534M999 532V534M1000 532V534M1001 532V534M1002 532V534M1003 533V534M1004 532V534M1005 533V534M1006 533V534M1007 533V534M1008 533V535M1009 533V535M1010 533V535M1011 533V535M1012 533V535M1013 533V535M1014 533V535M1015 533V535M1016 533V535M1017 533V535M1018 534V535M1019 534V536M1020 534V536M1021 534V536M1022 534V535M1023 534V536M1024 534V536M1025 534V536M1026 534V536M1027 534V536M1028 534V536M1029 535V536M1030 535V538M1031 535V539M1032 535V536M1033 535V536M1034 535V536M1035 535V537M1036 535V537M1037 535V537M1038 535V537M1039 536V537M1040 534V537M1041 535V537M1042 536V537M1043 536V537M1044 536V540M1045 536V538M1046 536V538M1047 536V538M1048 536V538M1049 536V538M1050 537V538M1051 537V538M1052 537V538M1053 537V539M1054 537V539M1055 537V539M1056 537V539M1057 537V539M1058 538V539M1059 538V539M1060 538V539M1061 538V539M1062 538V540M1063 538V540M1064 538V540M1065 539V540M1066 538V540M1067 538V540M1068 539V541M1069 538V540M1070 539V540M1071 539V540M1072 539V541M1073 539V541M1074 539V541M1075 539V541M1076 539V541M1077 539V541M1078 540V541M1079 539V541M1080 540V543M1081 539V541M1082 540V541M1083 539V541M1084 539V541M1085 539V541M1086 539V541M1087 539V541M1088 539V541M1089 539V541M1090 540V541M1091 540V541M1092 539V541M1093 540V541M1094 539V541M1095 540V541M1096 539V541M1097 539V543M1098 539V541M1099 539V541M1100 540V541M1101 539V541M1102 539V541M1103 539V541M1104 539V541M1105 540V541M1106 540V541M1107 539V541M1108 539V542M1109 540V541M1110 540V541M1111 539V541M1112 540V542M1113 540V541M1114 540V541M1115 540V541M1116 539V541M1117 540V541M1118 540V541M1119 539V541M1120 540V541M1121 540V541M1122 540V541M1123 540V541M1124 539V541M1125 540V541M1126 540V541M1127 540V541M1128 540V541M1129 539V542M1130 540V541M1131 540V541M1132 539V541M1133 540V542M1134 540V541M1135 540V541M1136 540V541M1137 540V542M1138 539V541M1139 540V541M1140 540V541M1141 540V542M1142 540V542M1143 540V541M1144 540V541M1145 540V541M1146 540V541M1147 540V541M1148 540V542M1149 540V542M1150 540V541M1151 540V542M1152 540V542M1153 540V541M1154 540V542M1155 540V542M1156 540V542M1157 540V542M1158 540V544M1159 540V542M1160 540V544M1161 540V543M1162 540V544M1163 540V542M1164 540V541M1165 540V542M1166 540V542M1167 540V542M1168 540V542M1169 540V542M1170 540V542M1171 540V542M1172 540V542M1173 540V542M1174 540V544M1175 541V542M1176 540V542M1177 540V542M1178 539V542M1179 540V542M1180 540V542M1181 540V542M1182 540V542M1183 540V542M1184 541V542M1185 540V542M1186 540V542M1187 540V542M1188 540V542M1189 540V542M1190 541V542M1191 540V542M1192 541V542M1193 540V542M1194 541V542M1195 539V542M1196 541V542M1197 541V542M1198 541V542M1199 540V542M1200 540V542M1201 540V543M1202 541V542M1203 541V543M1204 541V542M1205 538V542M1206 541V543M1207 541V542M1208 540V543M1209 541V542M1210 541V542M1211 540V542M1212 541V542M1213 541V542M1214 541V543M1215 541V542M1216 541V542M1217 541V542M1218 541V542M1219 541V542M1220 541V543M1221 541V542M1222 541V542M1223 541V542M1224 541V542M1225 541V542M1226 541V542M1227 540V543M1228 538V543M1229 541V545M1230 541V543M1231 541V543M1232 541V542M1233 541V542M1234 541V543M1235 541V542M1236 540V542M1237 541V543M1238 541V542M1239 540V542M1240 541V542M1241 541V543M1242 541V542M1243 541V543M1244 541V543M1245 541V543M1246 541V543M1247 541V543M1248 541V543M1249 541V543M1250 541V543M1251 541V543M1252 541V543M1253 541V543M1254 541V543M1255 541V543M1256 541V543M1257 541V543M1258 541V543M1259 541V543M1260 542V543M1261 541V545M1262 541V543M1263 542V543M1264 541V543M1265 541V543M1266 541V543M1267 542V543M1268 541V543M1269 541V543M1270 541V543M1271 542V543M1272 541V543M1273 541V543M1274 541V543M1275 542V543M1276 541V543M1277 541V545M1278 542V543M1279 542V543M1280 542V543M1281 542V543M1282 541V543M1283 542V543M1284 542V543M1285 541V543M1286 541V543M1287 542V543M1288 542V543M1289 542V543M1290 541V543M1291 542V543M1292 542V543M1293 542V543M1294 542V543M1295 542V544M1296 542V543M1297 542V544M1298 542V543M1299 542V543M1300 542V543M1301 542V544M1302 542V544M1303 541V543M1304 542V543M1305 542V544M1306 541V543M1307 542V543M1308 542V543M1309 542V543M1310 541V543M1311 542V544M1312 542V543M1313 542V543M1314 542V543M1315 541V543M1316 542V543M1317 541V543M1318 542V544M1319 542V543M1320 542V543M1321 542V543M1322 541V543M1323 542V543M1324 542V543M1325 542V543M1326 541V543M1327 542V543M1328 541V543M1329 541V543M1330 541V543M1331 541V543M1332 541V543M1333 541V543M1334 542V543M1335 542V543M1336 542V543M1337 542V543M1338 542V543M1339 541V544M1340 542V543M1341 542V543M1342 541V543M1343 541V543M1344 541V543M1345 541V543M1346 539V543M1347 541V543M1348 541V543M1349 541V543M1350 541V543M1351 541V543M1352 541V543M1353 542V543M1354 541V543M1355 541V543M1356 541V543M1357 541V543M1358 541V543M1359 541V543M1360 541V543M1361 541V543M1362 541V543M1363 541V543M1364 541V543M1365 541V543M1366 541V543M1367 541V543M1368 541V543M1369 541V543M1370 541V543M1371 541V543M1372 541V543M1373 541V543M1374 541V543M1375 541V543M1376 541V542M1377 541V542M1378 541V543M1379 541V543M1380 541V542M1381 541V542M1382 539V542M1383 541V542M1384 541V543M1385 541V543M1386 541V543M1387 541V542M1388 541V542M1389 541V543M1390 541V543M1391 541V542M1392 541V543M1393 541V543M1394 541V542M1395 541V543M1396 541V543M1397 541V543M1398 541V543M1399 541V543M1400 541V543M1401 541V543M1402 541V543M1403 541V542M1404 541V543M1405 540V543M1406 541V542M1407 541V544M1408 541V543M1409 541V543M1410 541V542M1411 541V542M1412 541V542M1413 541V542M1414 541V543M1415 541V543M1416 540V542M1417 540V542M1418 540V542M1419 541V542M1420 541V542M1421 541V543M1422 541V542M1423 540V542M1424 540V543M1425 541V543M1426 541V542M1427 540V543M1428 541V542M1429 541V542M1430 541V542M1431 541V543M1432 541V543M1433 541V543M1434 540V542M1435 541V542M1436 541V542M1437 541V542M1438 540V544M1439 541V542M1440 541V542M1441 540V542M1442 541V542M1443 540V543M1444 541V542M1445 541V542M1446 540V542M1447 540V542M1448 541V542M1449 540V542M1450 541V542M1451 540V542M1452 540V542M1453 541V542M1454 540V542M1455 541V542M1456 540V542M1457 540V542M1458 540V542M1459 540V543M1460 540V542M1461 541V542M1462 540V542M1463 541V542M1464 541V542M1465 540V542M1466 541V542M1467 540V542M1468 541V542M1469 540V542M1470 540V543M1471 540V542M1472 540V542M1473 540V542M1474 540V542M1475 541V542M1476 540V542M1477 540V542M1478 540V542M1479 538V543M1480 540V542M1481 541V542M1482 540V542M1483 540V542M1484 540V542M1485 541V542M1486 540V543M1487 540V542M1488 540V542M1489 540V542M1490 540V542M1491 540V542M1492 540V542M1493 540V542M1494 540V542M1495 540V542M1496 540V542M1497 540V542M1498 540V542M1499 540V542M1500 540V542M1501 540V541M1502 540V542M1503 540V541M1504 540V542M1505 540V542M1506 540V542M1507 540V542M1508 540V541M1509 540V541M1510 540V541M1511 540V542M1512 540V542M1513 540V541M1514 540V541M1515 540V542M1516 540V541M1517 540V541M1518 540V541M1519 540V542M1520 540V542M1521 540V541M1522 540V541M1523 539V542M1524 540V541M1525 540V542M1526 540V541M1527 540V541M1528 540V541M1529 540V542M1530 540V541M1531 539V541M1532 540V541M1533 540V541M1534 540V541M1535 539V541M1536 540V541M1537 539V541M1538 539V541M1539 540V543M1540 540V541M1541 539V541M1542 540V541M1543 540V541M1544 540V541M1545 539V541M1546 539V541M1547 539V541M1548 539V541M1549 539V542M1550 539V541M1551 539V541M1552 539V541M1553 539V541M1554 539V541M1555 539V541M1556 539V540M1557 539V541M1558 539V541M1559 539V540M1560 539V541M1561 539V541M1562 539V540M1563 539V541M1564 538V540M1565 539V540M1566 539V540M1567 539V540M1568 539V540M1569 539V541M1570 539V540M1571 539V540M1572 539V540M1573 538V540M1574 539V540M1575 539V541M1576 539V541M1577 539V541M1578 539V540M1579 539V540M1580 538V540M1581 539V540M1582 539V540M1583 539V541M1584 539V540M1585 539V540M1586 539V540M1587 539V540M1588 538V540M1589 539V540M1590 538V540M1591 538V540M1592 538V540M1593 539V540M1594 536V540M1595 538V540M1596 539V540M1597 538V540M1598 538V540M1599 538V540M1600 538V540M1601 538V540M1602 538V540M1603 538V540M1604 538V541M1605 538V540M1606 538V540M1607 538V540M1608 538V540M1609 538V539M1610 538V539M1611 538V540M1612 537V540M1613 538V539M1614 538V540M1615 538V539M1616 537V539M1617 538V539M1618 538V539M1619 537V539M1620 537V539M1621 538V539M1622 538V539M1623 538V540M1624 538V539M1625 537V539M1626 537V539M1627 538V539M1628 538V539M1629 538V540M1630 538V540M1631 535V539M1632 538V540M1633 537V539M1634 538V539M1635 538V539M1636 537V539M1637 537V539M1638 537V539M1639 538V539M1640 537V539M1641 538V539M1642 537V539M1643 537V540M1644 537V539M1645 537V539M1646 537V539M1647 537V539M1648 537V539" stroke="#ff4040" stroke-width="1" fill="none"/><path d="M25 675V676M26 675V676M27 675V676M28 675V676M29 675V676M30 675V676M31 675V676M32 675V676M33 675V676M34 675V676M35 675V676M36 675V676M37 675V676M38 675V676M39 675V676M40 675V676M41 675V676M42 675V676M43 675V676M44 675V676M45 675V676M46 675V676M47 675V676M48 675V676M49 675V676M50 675V676M51 675V676M52 675V676M53 675V676M54 675V676M55 675V676M56 675V676M57 675V676M58 675V676M59 675V676M60 675V676M61 675V676M62 675V676M63 675V676M64 675V676M65 675V676M66 675V676M67 675V676M68 675V676M69 675V676M70 675V676M71 675V676M72 675V676M73 675V676M74 675V676M75 675V676M76 675V676M77 675V676M78 675V676M79 675V676M80 675V676M81 675V676M82 675V676M83 675V676M84 675V676M85 675V676M86 675V676M87 675V676M88 675V676M89 675V676M90 675V676M91 675V676M92 675V676M93 675V676M94 675V676M95 675V676M96 675V676M97 675V676M98 675V676M99 675V676M100 675V676M101 675V676M102 675V676M103 675V676M104 675V676M105 675V676M106 675V676M107 675V676M108 675V676M109 675V676M110 675V676M111 675V676M112 675V676M113 675V676M114 675V676M115 675V676M116 675V676M117 675V676M118 675V676M119 675V676M120 675V676M121 675V676M122 675V676M123 675V676M124 675V676M125 675V676M126 675V676M127 675V676M128 675V676M129 675V676M130 675V676M131 675V676M132 675V676M133 675V676M134 675V676M135 675V676M136 675V676M137 675V676M138 675V676M139 675V676M140 675V676M141 675V676M142 675V676M143 675V676M144 675V676M145 675V676M146 675V676M147 675V676M148 675V676M149 675V676M150 675V676M151 675V676M152 675V676M153 675V676M154 675V676M155 675V676M156 675V676M157 675V676M158 675V676M159 675V676M160 675V676M161 675V676M162 675V676M163 675V676M164 675V676M165 675V676M166 675V676M167 675V676M168 675V676M169 675V676M170 675V676M171 675V676M172 675V676M173 675V676M174 675V676M175 675V676M176 675V676M177 675V676M178 675V676M179 675V676M180 675V676M181 675V676M182 675V676M183 675V676M184 675V676M185 675V676M186 675V676M187 675V676M188 675V676M189 675V676M190 675V676M191 675V676M192 675V676M193 675V676M194 675V676M195 675V676M196 675V676M197 675V676M198 675V676M199 675V676M200 675V676M201 675V676M202 675V676M203 675V676M204 675V676M205 675V676M206 675V676M207 675V676M208 675V676M209 675V676M210 675V676M211 675V676M212 675V676M213 675V676M214 675V676M215 675V676M216 675V676M217 675V676M218 675V676M219 675V676M220 675V676M221 675V676M222 675V676M223 675V676M224 675V676M225 675V676M226 675V676M227 675V676M228 675V676M229 675V676M230 675V676M231 675V676M232 675V676M233 675V676M234 675V676M235 675V676M236 675V676M237 675V676M238 675V676M239 675V676M240 675V676M241 675V676M242 675V676M243 675V676M244 675V676M245 675V676M246 675V676M247 675V676M248 675V676M249 675V676M250 675V676M251 675V676M252 675V676M253 675V676M254 675V676M255 675V676M256 675V676M257 675V676M258 675V676M259 675V676M260 675V676M261 675V676M262 675V676M263 675V676M264 675V676M265 675V676M266 675V676M267 675V676M268 675V676M269 675V676M270 675V676M271 675V676M272 675V676M273 675V676M274 675V676M275 675V676M276 675V676M277 675V676M278 675V676M279 675V676M280 675V676M281 675V676M282 675V676M283 675V676M284 675V676M285 675V676M286 675V676M287 675V676M288 675V676M289 675V676M290 675V676M291 675V676M292 675V676M293 675V676M294 675V676M295 675V676M296 675V676M297 675V676M298 675V676M299 675V676M300 675V676M301 675V676M302 675V676M303 675V676M304 675V676M305 675V676M306 675V676M307 675V676M308 675V676M309 675V676M310 675V676M311 675V676M312 675V676M313 675V676M314 675V676M315 675V676M316 675V676M317 675V676M318 675V676M319 675V676M320 675V676M321 675V676M322 675V676M323 675V676M324 675V676M325 675V676M326 675V676M327 675V676M328 675V676M329 675V676M330 675V676M331 675V676M332 675V676M333 675V676M334 675V676M335 675V676M336 675V676M337 675V676M338 675V676M339 675V676M340 675V676M341 675V676M342 675V676M343 675V676M344 675V676M345 675V676M346 675V676M347 675V676M348 675V676M349 675V676M350 675V676M351 675V676M352 675V676M353 675V676M354 675V676M355 675V676M356 675V676M357 675V676M358 675V676M359 675V676M360 675V676M361 675V676M362 675V676M363 675V676M364 675V676M365 675V676M366 675V676M367 675V676M368 675V676M369 675V676M370 675V676M371 675V676M372 675V676M373 675V676M374 675V676M375 675V676M376 675V676M377 674V676M378 674V675M379 674V675M380 674V675M381 674V675M382 674V675M383 674V675M384 674V675M385 673V675M386 673V674M387 673V674M388 672V674M389 672V673M390 672V673M391 671V673M392 671V672M393 670V672M394 670V671M395 669V671M396 668V670M397 668V669M398 667V669M399 666V668M400 665V667M401 664V666M402 663V665M403 662V664M404 661V663M405 660V662M406 658V661M407 657V659M408 656V658M409 654V657M410 653V655M411 651V654M412 650V652M413 649V651M414 647V650M415 646V648M416 645V647M417 645V646M418 645V646M419 645V647M420 646V648M421 647V650M422 649V652M423 651V654M424 653V656M425 655V658M426 657V661M427 660V663M428 662V665M429 664V667M430 666V669M431 668V670M432 669V671M433 670V672M434 671V673M435 672V674M436 673V674M437 673V675M438 674V675M439 674V675M440 674V676M441 675V676M442 675V676M443 675V676M444 675V676M445 675V676M446 675V676M447 675V676M448 675V676M449 675V676M450 675V676M451 675V676M452 675V676M453 675V676M454 675V676M455 675V676M456 675V676M457 675V676M458 675V676M459 675V676M460 675V676M461 675V676M462 675V676M463 675V676M464 675V676M465 675V676M466 675V676M467 675V676M468 675V676M469 675V676M470 675V676M471 675V676M472 675V676M473 675V676M474 675V676M475 675V676M476 675V676M477 675V676M478 675V676M479 675V676M480 675V676M481 675V676M482 675V676M483 675V676M484 675V676M485 675V676M486 675V676M487 675V676M488 675V676M489 675V676M490 675V676M491 675V676M492 675V676M493 675V676M494 675V676M495 675V676M496 675V676M497 675V676M498 675V676M499 675V676M500 675V676M501 675V676M502 675V676M503 675V676M504 675V676M505 675V676M506 675V676M507 675V676M508 675V676M509 675V676M510 675V676M511 675V676M512 675V676M513 675V676M514 675V676M515 675V676M516 675V676M517 675V676M518 675V676M519 675V676M520 675V676M521 675V676M522 675V676M523 675V676M524 675V676M525 675V676M526 675V676M527 675V676M528 675V676M529 675V676M530 675V676M531 675V676M532 675V676M533 675V676M534 675V676M535 675V676M536 675V676M537 675V676M538 675V676M539 675V676M540 675V676M541 675V676M542 675V676M543 675V676M544 675V676M545 675V676M546 675V676M547 675V676M548 675V676M549 675V676M550 675V676M551 675V676M552 675V676M553 675V676M554 675V676M555 675V676M556 675V676M557 675V676M558 675V676M559 675V676M560 675V676M561 675V676M562 675V676M563 675V676M564 675V676M565 675V676M566 675V676M567 675V676M568 675V676M569 675V676M570 675V676M571 675V676M572 675V676M573 675V676M574 675V676M575 675V676M576 675V676M577 675V676M578 675V676M579 675V676M580 675V676M581 675V676M582 675V676M583 675V676M584 675V676M585 675V676M586 675V676M587 675V676M588 675V676M589 675V676M590 675V676M591 675V676M592 675V676M593 675V676M594 675V676M595 675V676M596 675V676M597 675V676M598 675V676M599 675V676M600 675V676M601 675V676M602 675V676M603 675V676M604 675V676M605 675V676M606 675V676M607 675V676M608 675V676M609 675V676M610 675V676M611 675V676M612 675V676M613 675V676M614 675V676M615 675V676M616 675V676M617 675V676M618 675V676M619 675V676M620 675V676M621 675V676M622 675V676M623 675V676M624 675V676M625 675V676M626 675V676M627 675V676M628 675V676M629 675V676M630 675V676M631 675V676M632 675V676M633 675V676M634 675V676M635 675V676M636 675V676M637 675V676M638 675V676M639 675V676M640 675V676M641 675V676M642 675V676M643 675V676M644 675V676M645 675V676M646 675V676M647 675V676M648 675V676M649 675V676M650 674V676M651 674V675M652 673V675M653 673V674M654 672V674M655 671V673M656 669V672M657 668V670M658 666V669M659 664V667M660 660V665M661 655V661M662 651V656M663 646V652M664 642V647M665 641V643M666 640V642M667 624V641M668 593V625M669 585V594M670 589V602M671 601V617M672 616V631M673 630V643M674 642V651M675 650V658M676 657V663M677 662V666M678 665V668M679 667V670M680 669V671M681 670V671M682 670V672M683 671V673M684 672V673M685 672V674M686 673V675M687 674V675M688 674V675M689 674V676M690 675V676M691 675V676M692 675V676M693 675V676M694 675V676M695 675V676M696 675V676M697 675V676M698 675V676M699 675V676M700 675V676M701 675V676M702 675V676M703 675V676M704 675V676M705 675V676M706 675V676M707 675V676M708 675V676M709 675V676M710 675V676M711 675V676M712 675V676M713 675V676M714 675V676M715 675V676M716 675V676M717 675V676M718 675V676M719 675V676M720 675V676M721 675V676M722 675V676M723 675V676M724 675V676M725 675V676M726 675V676M727 675V676M728 675V676M729 675V676M730 675V676M731 675V676M732 675V676M733 675V676M734 675V676M735 675V676M736 674V676M737 673V675M738 670V674M739 665V671M740 658V666M741 648V659M742 639V649M743 632V640M744 630V633M745 632V638M746 637V656M747 655V664M748 663V668M749 667V671M750 670V672M751 671V674M752 673V674M753 673V675M754 674V675M755 674V676M756 675V676M757 675V676M758 675V676M759 675V676M760 675V676M761 675V676M762 675V676M763 675V676M764 675V676M765 675V676M766 675V676M767 675V676M768 675V676M769 675V676M770 675V676M771 675V676M772 675V676M773 675V676M774 675V676M775 675V676M776 675V676M777 675V676M778 675V676M779 675V676M780 675V676M781 675V676M782 675V676M783 675V676M784 675V676M785 675V676M786 675V676M787 675V676M788 675V676M789 675V676M790 675V676M791 675V676M792 674V676M793 674V675M794 673V675M795 670V674M796 665V671M797 659V666M798 651V660M799 643V652M800 639V644M801 638V642M802 641V647M803 646V661M804 660V667M805 666V671M806 670V672M807 671V673M808 672V674M809 673V675M810 674V675M811 674V675M812 674V676M813 675V676M814 675V676M815 675V676M816 675V676M817 675V676M818 675V676M819 675V676M820 675V676M821 675V676M822 675V676M823 675V676M824 675V676M825 675V676M826 675V676M827 675V676M828 675V676M829 675V676M830 675V676M831 675V676M832 675V676M833 675V676M834 675V676M835 675V676M836 675V676M837 675V676M838 675V676M839 675V676M840 675V676M841 675V676M842 675V676M843 675V676M844 675V676M845 675V676M846 675V676M847 675V676M848 675V676M849 675V676M850 675V676M851 675V676M852 675V676M853 674V676M854 673V675M855 671V674M856 666V672M857 660V667M858 652V661M859 645V653M860 639V646M861 638V641M862 640V645M863 644V660M864 659V667M865 666V670M866 669V672M867 671V673M868 672V674M869 673V674M870 673V675M871 674V675M872 674V676M873 675V676M874 675V676M875 675V676M876 675V676M877 675V676M878 675V676M879 675V676M880 675V676M881 675V676M882 675V676M883 675V676M884 675V676M885 675V676M886 675V676M887 675V676M888 675V676M889 675V676M890 675V676M891 675V676M892 675V676M893 675V676M894 675V676M895 675V676M896 675V676M897 675V676M898 675V676M899 675V676M900 675V676M901 675V676M902 675V676M903 675V676M904 675V676M905 675V676M906 675V676M907 675V676M908 675V676M909 675V676M910 675V676M911 675V676M912 675V676M913 675V676M914 674V676M915 674V675M916 673V675M917 670V674M918 665V671M919 659V666M920 651V660M921 644V652M922 640V645M923 639V642M924 641V648M925 647V662M926 661V668M927 667V671M928 670V672M929 671V673M930 672V674M931 673V675M932 674V675M933 674V675M934 674V676M935 675V676M936 675V676M937 675V676M938 675V676M939 675V676M940 675V676M941 675V676M942 675V676M943 675V676M944 675V676M945 675V676M946 675V676M947 675V676M948 675V676M949 675V676M950 675V676M951 675V676M952 675V676M953 675V676M954 675V676M955 675V676M956 675V676M957 675V676M958 675V676M959 675V676M960 675V676M961 675V676M962 675V676M963 675V676M964 675V676M965 675V676M966 675V676M967 675V676M968 675V676M969 675V676M970 675V676M971 675V676M972 675V676M973 675V676M974 675V676M975 675V676M976 675V676M977 675V676M978 675V676M979 675V676M980 674V676M981 673V675M982 672V674M983 668V673M984 663V669M985 656V664M986 648V657M987 640V649M988 638V641M989 638V643M990 642V654M991 653V664M992 663V669M993 668V671M994 670V673M995 672V674M996 673V674M997 673V675M998 674V675M999 674V676M1000 675V676M1001 675V676M1002 675V676M1003 675V676M1004 675V676M1005 675V676M1006 675V676M1007 675V676M1008 675V676M1009 675V676M1010 675V676M1011 675V676M1012 675V676M1013 675V676M1014 675V676M1015 675V676M1016 675V676M1017 675V676M1018 675V676M1019 675V676M1020 675V676M1021 675V676M1022 675V676M1023 675V676M1024 675V676M1025 675V676M1026 675V676M1027 675V676M1028 675V676M1029 675V676M1030 675V676M1031 675V676M1032 675V676M1033 675V676M1034 675V676M1035 675V676M1036 675V676M1037 675V676M1038 675V676M1039 675V676M1040 675V676M1041 675V676M1042 675V676M1043 675V676M1044 675V676M1045 675V676M1046 675V676M1047 674V676M1048 673V675M1049 672V674M1050 669V673M1051 663V670M1052 655V664M1053 645V656M1054 635V646M1055 630V636M1056 629V633M1057 632V640M1058 639V658M1059 657V665M1060 664V670M1061 669V671M1062 670V673M1063 672V674M1064 673V674M1065 673V675M1066 674V675M1067 674V676M1068 675V676M1069 675V676M1070 675V676M1071 675V676M1072 675V676M1073 675V676M1074 675V676M1075 675V676M1076 675V676M1077 675V676M1078 675V676M1079 675V676M1080 675V676M1081 675V676M1082 675V676M1083 675V676M1084 675V676M1085 675V676M1086 675V676M1087 675V676M1088 675V676M1089 675V676M1090 675V676M1091 675V676M1092 675V676M1093 675V676M1094 675V676M1095 675V676M1096 675V676M1097 675V676M1098 675V676M1099 675V676M1100 675V676M1101 675V676M1102 675V676M1103 675V676M1104 675V676M1105 675V676M1106 675V676M1107 675V676M1108 675V676M1109 675V676M1110 675V676M1111 674V676M1112 673V675M1113 673V674M1114 669V674M1115 663V670M1116 657V664M1117 649V658M1118 642V650M1119 640V643M1120 640V645M1121 644V655M1122 654V665M1123 664V669M1124 668V672M1125 671V673M1126 672V674M1127 673V674M1128 673V675M1129 674V675M1130 674V676M1131 675V676M1132 675V676M1133 675V676M1134 675V676M1135 675V676M1136 675V676M1137 675V676M1138 675V676M1139 675V676M1140 675V676M1141 675V676M1142 675V676M1143 675V676M1144 675V676M1145 675V676M1146 675V676M1147 675V676M1148 675V676M1149 675V676M1150 675V676M1151 675V676M1152 675V676M1153 675V676M1154 675V676M1155 675V676M1156 675V676M1157 675V676M1158 675V676M1159 675V676M1160 675V676M1161 675V676M1162 675V676M1163 675V676M1164 675V676M1165 675V676M1166 675V676M1167 675V676M1168 675V676M1169 675V676M1170 675V676M1171 675V676M1172 675V676M1173 675V676M1174 675V676M1175 675V676M1176 675V676M1177 675V676M1178 675V676M1179 674V676M1180 673V675M1181 672V674M1182 668V673M1183 662V669M1184 654V663M1185 646V655M1186 640V647M1187 638V641M1188 639V644M1189 643V658M1190 657V666M1191 665V669M1192 668V672M1193 671V673M1194 672V674M1195 673V674M1196 673V675M1197 674V675M1198 674V676M1199 675V676M1200 675V676M1201 675V676M1202 675V676M1203 675V676M1204 675V676M1205 675V676M1206 675V676M1207 675V676M1208 675V676M1209 675V676M1210 675V676M1211 675V676M1212 675V676M1213 675V676M1214 675V676M1215 675V676M1216 675V676M1217 675V676M1218 675V676M1219 675V676M1220 675V676M1221 675V676M1222 675V676M1223 675V676M1224 675V676M1225 675V676M1226 675V676M1227 675V676M1228 675V676M1229 675V676M1230 675V676M1231 675V676M1232 675V676M1233 675V676M1234 675V676M1235 675V676M1236 675V676M1237 675V676M1238 675V676M1239 675V676M1240 675V676M1241 675V676M1242 675V676M1243 675V676M1244 675V676M1245 675V676M1246 675V676M1247 675V676M1248 674V676M1249 673V675M1250 671V674M1251 666V672M1252 660V667M1253 652V661M1254 645V653M1255 639V646M1256 638V641M1257 640V645M1258 644V660M1259 659V667M1260 666V670M1261 669V672M1262 671V673M1263 672V674M1264 673V674M1265 673V675M1266 674V675M1267 674V676M1268 675V676M1269 675V676M1270 675V676M1271 675V676M1272 675V676M1273 675V676M1274 675V676M1275 675V676M1276 675V676M1277 675V676M1278 675V676M1279 675V676M1280 675V676M1281 675V676M1282 675V676M1283 675V676M1284 675V676M1285 675V676M1286 675V676M1287 675V676M1288 675V676M1289 675V676M1290 675V676M1291 675V676M1292 675V676M1293 675V676M1294 675V676M1295 675V676M1296 675V676M1297 675V676M1298 675V676M1299 675V676M1300 675V676M1301 675V676M1302 675V676M1303 675V676M1304 675V676M1305 675V676M1306 675V676M1307 675V676M1308 675V676M1309 675V676M1310 675V676M1311 675V676M1312 675V676M1313 675V676M1314 675V676M1315 675V676M1316 675V676M1317 675V676M1318 675V676M1319 674V676M1320 673V675M1321 671V674M1322 667V672M1323 661V668M1324 653V662M1325 645V654M1326 638V646M1327 636V639M1328 637V642M1329 641V657M1330 656V665M1331 664V669M1332 668V671M1333 670V673M1334 672V674M1335 673V674M1336 673V675M1337 674V675M1338 674V676M1339 675V676M1340 675V676M1341 675V676M1342 675V676M1343 675V676M1344 675V676M1345 675V676M1346 675V676M1347 675V676M1348 675V676M1349 675V676M1350 675V676M1351 675V676M1352 675V676M1353 675V676M1354 675V676M1355 675V676M1356 675V676M1357 675V676M1358 675V676M1359 675V676M1360 675V676M1361 675V676M1362 675V676M1363 675V676M1364 675V676M1365 675V676M1366 675V676M1367 675V676M1368 675V676M1369 675V676M1370 675V676M1371 675V676M1372 675V676M1373 675V676M1374 675V676M1375 675V676M1376 675V676M1377 675V676M1378 675V676M1379 675V676M1380 675V676M1381 675V676M1382 675V676M1383 675V676M1384 675V676M1385 675V676M1386 675V676M1387 675V676M1388 674V676M1389 673V675M1390 672V674M1391 668V673M1392 662V669M1393 654V663M1394 645V655M1395 636V646M1396 634V637M1397 634V640M1398 639V652M1399 651V663M1400 662V668M1401 667V671M1402 670V672M1403 671V674M1404 673V674M1405 673V675M1406 674V675M1407 674V676M1408 675V676M1409 675V676M1410 675V676M1411 675V676M1412 675V676M1413 675V676M1414 675V676M1415 675V676M1416 675V676M1417 675V676M1418 675V676M1419 675V676M1420 675V676M1421 675V676M1422 675V676M1423 675V676M1424 675V676M1425 675V676M1426 675V676M1427 675V676M1428 675V676M1429 675V676M1430 675V676M1431 675V676M1432 675V676M1433 675V676M1434 675V676M1435 675V676M1436 675V676M1437 675V676M1438 675V676M1439 675V676M1440 675V676M1441 675V676M1442 675V676M1443 675V676M1444 675V676M1445 675V676M1446 675V676M1447 675V676M1448 675V676M1449 675V676M1450 675V676M1451 675V676M1452 675V676M1453 675V676M1454 675V676M1455 675V676M1456 675V676M1457 674V676M1458 673V675M1459 672V674M1460 668V673M1461 662V669M1462 654V663M1463 646V655M1464 640V647M1465 638V641M1466 639V644M1467 643V658M1468 657V666M1469 665V669M1470 668V672M1471 671V673M1472 672V674M1473 673V674M1474 673V675M1475 674V675M1476 674V676M1477 675V676M1478 675V676M1479 675V676M1480 675V676M1481 675V676M1482 675V676M1483 675V676M1484 675V676M1485 675V676M1486 675V676M1487 675V676M1488 675V676M1489 675V676M1490 675V676M1491 675V676M1492 675V676M1493 675V676M1494 675V676M1495 675V676M1496 675V676M1497 675V676M1498 675V676M1499 675V676M1500 675V676M1501 675V676M1502 675V676M1503 675V676M1504 675V676M1505 675V676M1506 675V676M1507 675V676M1508 675V676M1509 675V676M1510 675V676M1511 675V676M1512 675V676M1513 675V676M1514 675V676M1515 675V676M1516 675V676M1517 675V676M1518 675V676M1519 675V676M1520 675V676M1521 675V676M1522 675V676M1523 675V676M1524 675V676M1525 675V676M1526 675V676M1527 674V676M1528 673V675M1529 671V674M1530 667V672M1531 661V668M1532 653V662M1533 645V654M1534 640V646M1535 639V642M1536 641V646M1537 645V660M1538 659V667M1539 666V670M1540 669V672M1541 671V673M1542 672V674M1543 673V675M1544 674V675M1545 674V675M1546 674V676M1547 675V676M1548 675V676M1549 675V676M1550 675V676M1551 675V676M1552 675V676M1553 675V676M1554 675V676M1555 675V676M1556 675V676M1557 675V676M1558 675V676M1559 675V676M1560 675V676M1561 675V676M1562 675V676M1563 675V676M1564 675V676M1565 675V676M1566 675V676M1567 675V676M1568 675V676M1569 675V676M1570 675V676M1571 675V676M1572 675V676M1573 675V676M1574 675V676M1575 675V676M1576 675V676M1577 675V676M1578 675V676M1579 675V676M1580 675V676M1581 675V676M1582 675V676M1583 675V676M1584 675V676M1585 675V676M1586 675V676M1587 675V676M1588 675V676M1589 675V676M1590 675V676M1591 675V676M1592 675V676M1593 675V676M1594 675V676M1595 675V676M1596 675V676M1597 674V676M1598 673V675M1599 671V674M1600 667V672M1601 660V668M1602 651V661M1603 642V652M1604 635V643M1605 633V636M1606 634V640M1607 639V655M1608 654V664M1609 663V669M1610 668V671M1611 670V672M1612 671V674M1613 673V674M1614 673V675M1615 674V675M1616 674V676M1617 675V676M1618 675V676M1619 675V676M1620 675V676M1621 675V676M1622 675V676M1623 675V676M1624 675V676M1625 675V676M1626 675V676M1627 675V676M1628 675V676M1629 675V676M1630 675V676M1631 675V676M1632 675V676M1633 675V676M1634 675V676M1635 675V676M1636 675V676M1637 675V676M1638 675V676M1639 675V676M1640 675V676M1641 675V676M1642 675V676M1643 675V676M1644 675V676M1645 675V676M1646 675V676M1647 675V676M1648 675V676" stroke="#f040f0" stroke-width="1" fill="none"/></g>
<!-- cursor labels -->
<g fill="none" stroke="#c8c000" stroke-width="1" transform="translate(0.5,0.5)">
<rect x="236" y="778" width="11" height="11"/>
<rect x="236" y="790" width="11" height="11" stroke-dasharray="1 1"/>
<rect x="625" y="790" width="11" height="11"/>
<rect x="625" y="778" width="11" height="11" stroke-dasharray="1 1"/>
</g>
<text x="238.2" y="787.6" font-family='"Liberation Sans",sans-serif' font-weight="bold" font-size="10" fill="#c8c000">A</text>
<text x="627.2" y="799.7" font-family='"Liberation Sans",sans-serif' font-weight="bold" font-size="10" fill="#c8c000">B</text>
<!-- channel labels -->
<path d="M9.2 311.0h3v12.3h-3.2v-8.7q-1.3 1-3.1 1.4v-2.4q2.3-0.7 3.3-2.6z" fill="#00ffff" shape-rendering="auto"/><path d="M15 315.9h2.4v-3l4.9 4.6l-4.9 4.6v-3h-2.4z" fill="#00ffff"/>
<text x="4.8" y="504.4" font-family='"Liberation Serif",serif' font-weight="bold" font-size="18" textLength="9.4" lengthAdjust="spacingAndGlyphs" stroke="#40ff00" stroke-width="0.35" fill="#40ff00">2</text><path d="M15 496.9h2.4v-3l4.9 4.6l-4.9 4.6v-3h-2.4z" fill="#40ff00"/>
<text x="4.8" y="608.4" font-family='"Liberation Serif",serif' font-weight="bold" font-size="18" textLength="9.4" lengthAdjust="spacingAndGlyphs" stroke="#ff4040" stroke-width="0.35" fill="#ff4040">3</text><path d="M15 600.9h2.4v-3l4.9 4.6l-4.9 4.6v-3h-2.4z" fill="#ff4040"/>
<text x="4.8" y="709.4" font-family='"Liberation Serif",serif' font-weight="bold" font-size="18" textLength="9.4" lengthAdjust="spacingAndGlyphs" stroke="#ff40ff" stroke-width="0.35" fill="#ff40ff">4</text><path d="M15 701.9h2.4v-3l4.9 4.6l-4.9 4.6v-3h-2.4z" fill="#ff40ff"/>
<text x="4.8" y="783.4" font-family='"Liberation Serif",serif' font-weight="bold" font-size="18" textLength="9.4" lengthAdjust="spacingAndGlyphs" stroke="#ff4040" stroke-width="0.35" fill="#ff4040">5</text><path d="M15 775.9h2.4v-3l4.9 4.6l-4.9 4.6v-3h-2.4z" fill="#ff4040"/>
<!-- photo surround -->
<rect x="1561" y="651" width="84" height="140" fill="#000"/>
<g id="photo" shape-rendering="auto">
<defs>
<linearGradient id="fld" x1="0" y1="0" x2="0" y2="1"><stop offset="0" stop-color="#bfc44a"/><stop offset="0.35" stop-color="#adb63e"/><stop offset="0.7" stop-color="#8fa63a"/><stop offset="1" stop-color="#87993c"/></linearGradient>
<linearGradient id="sky" x1="0" y1="0" x2="1" y2="0"><stop offset="0" stop-color="#dfe3df"/><stop offset="0.6" stop-color="#eceeec"/><stop offset="1" stop-color="#f4f5f4"/></linearGradient>
<clipPath id="pc"><rect x="1563" y="653" width="80" height="136"/></clipPath>
<filter id="bl" x="-5%" y="-5%" width="110%" height="110%"><feGaussianBlur stdDeviation="5"/></filter>
</defs>
<g clip-path="url(#pc)"><g transform="translate(1563,653) scale(0.1)"><g filter="url(#bl)">
<rect x="-20" y="-20" width="840" height="1400" fill="url(#fld)"/>
<rect x="-20" y="-20" width="840" height="212" fill="url(#sky)"/>
<!-- field texture -->
<ellipse cx="100" cy="370" rx="110" ry="120" fill="#ccce50" opacity=".55"/>
<ellipse cx="710" cy="420" rx="100" ry="170" fill="#c6ca4e" opacity=".5"/>
<ellipse cx="690" cy="250" rx="120" ry="50" fill="#c8cc58" opacity=".6"/>
<ellipse cx="60" cy="700" rx="80" ry="120" fill="#90ac36" opacity=".8"/>
<ellipse cx="40" cy="1000" rx="70" ry="180" fill="#86a838" opacity=".9"/>
<path d="M520 740L820 700L820 1100L560 1120Z" fill="#a6b880"/><path d="M640 640L820 640L820 800L700 820Z" fill="#6c8a38"/>
<path d="M600 980L820 950L820 1100L560 1120Z" fill="#b6c2a4"/>
<!-- road -->
<path d="M-20 1200L520 1120L820 1095L820 1380L-20 1380Z" fill="#8d887a"/>
<path d="M-20 1290L820 1230L820 1380L-20 1380Z" fill="#a09c88"/>
<!-- rear wheel & engine smoke -->
<ellipse cx="432" cy="1236" rx="62" ry="52" fill="#25231f"/>
<ellipse cx="434" cy="1240" rx="36" ry="28" fill="#b4ac98"/>
<path d="M285 900L495 890L525 1070L495 1210L295 1210L255 1070Z" fill="#6c7178"/>
<path d="M335 950L470 940L490 1170L335 1180Z" fill="#8e949c" opacity=".7"/>
<path d="M290 1170L495 1175L495 1210L375 1240Z" fill="#2a2a2a"/>
<!-- right leg (image right) -->
<path d="M420 640L640 640L640 720L565 730L592 930L697 1075L652 1105L522 995L452 850L420 880Z" fill="#3a2b1e"/>
<path d="M553 735L577 742L582 812L564 820Z" fill="#cfd4c8"/>
<path d="M667 1095L727 1070L797 1210L787 1250L752 1262L702 1190Z" fill="#3c3c46"/>
<!-- seat / crotch / left leg -->
<path d="M250 640L560 630L520 900L260 900L180 860L90 830L150 740Z" fill="#2a211a"/>
<!-- front wheel -->
<ellipse cx="168" cy="1150" rx="88" ry="195" fill="#1c1c1c"/>
<ellipse cx="172" cy="1150" rx="66" ry="172" fill="#cfcdbd"/>
<ellipse cx="176" cy="1150" rx="52" ry="158" fill="#667646"/>
<path d="M140 980L250 980L240 1150L150 1170Z" fill="#1f1f22"/>
<!-- front carrier -->
<path d="M20 865L90 815L210 810L230 850L340 865L345 940L200 980L50 980Z" fill="#17171b"/>
<rect x="115" y="855" width="85" height="50" fill="#c9cbb8"/>
<rect x="215" y="875" width="70" height="30" fill="#3c4660"/>
<path d="M90 815Q150 790 212 815" fill="none" stroke="#9a9a96" stroke-width="14"/>
<rect x="345" y="838" width="85" height="32" fill="#c23a30"/>
<path d="M230 660L250 660L250 850L232 850Z" fill="#2a2a2a"/>
<!-- jacket -->
<path d="M250 250L360 235L470 235L550 260L605 335L595 470L510 520L550 570L640 665L600 740L500 720L250 700L185 640L130 560L120 500L180 380Z" fill="#4a3f2a"/>
<path d="M250 250L200 370L130 510L190 550L280 420Z" fill="#55482f"/>
<path d="M470 235L550 260L605 335L595 470L540 500L480 380Z" fill="#42371f"/>
<!-- shirt -->
<path d="M375 250L465 235L430 370L420 560L270 575L345 400Z" fill="#f0f0f3"/>
<!-- tie -->
<path d="M378 255L400 270L510 240L580 255L575 270L490 285L400 300L380 285Z" fill="#9c2334"/>
<!-- head -->
<ellipse cx="402" cy="155" rx="64" ry="84" fill="#b58868"/>
<path d="M322 90Q330 20 410 12Q490 20 495 100Q490 150 472 165Q465 100 420 80Q370 75 340 110Q330 110 322 90Z" fill="#2a2420"/>
<path d="M345 115L450 105L455 135L345 145Z" fill="#5a3c2c" opacity=".75"/>
<path d="M345 200Q390 225 430 205L425 235Q390 250 355 230Z" fill="#8a5e48"/>
<path d="M338 100L360 100L365 210L345 190Z" fill="#6a4836" opacity=".7"/>
<!-- mirror, hands -->
<path d="M510 470L590 455L605 495L550 530L510 520Z" fill="#8c8c86"/>
<ellipse cx="462" cy="560" rx="42" ry="55" fill="#d2a690"/>
<ellipse cx="115" cy="540" rx="42" ry="38" fill="#d2a690"/>
<!-- handlebar -->
<path d="M145 550Q150 650 200 675L290 675Q335 650 335 575" fill="none" stroke="#c8c8c0" stroke-width="16"/>
<path d="M270 578L410 562" stroke="#b0b0aa" stroke-width="16"/>
</g></g></g>
</g>

<!-- frame -->
<rect x="0" y="0" width="1" height="803" fill="#808080"/>
<rect x="0" y="0" width="1649" height="2" fill="#dfe6f6"/>
<rect x="0" y="2" width="1649" height="1" fill="#7c7c7c"/>
<rect x="0" y="802" width="1649" height="1" fill="#f0f0f0"/>
</svg>

<div id="desc">
<svg style="position:absolute;left:2.8px;top:3.2px" width="20" height="20" viewBox="0 0 18 18">
<defs><radialGradient id="bg" cx="0.4" cy="0.3" r="0.8"><stop offset="0" stop-color="#ffffff"/><stop offset="0.55" stop-color="#d6e4f4"/><stop offset="1" stop-color="#8ea6c8"/></radialGradient></defs>
<path d="M9 1.2a7.2 6.6 0 0 1 4.6 11.7l-3.9 3.9l-1.3-2.6a7.2 6.6 0 0 1 .6-13z" fill="url(#bg)" stroke="#a9bdd6" stroke-width="0.6"/>
<circle cx="9.2" cy="4.3" r="1.25" fill="#1b2f8f"/>
<path d="M7.4 6.4h2.9v4.6h1v1h-4v-1h1.1v-3.6h-1z" fill="#1b2f8f"/>
</svg>
<div class="ttl">File description</div>
<div class="ln" style="top:26px">1 - <span style="letter-spacing:0.05px">CRANK</span></div>
<div class="ln" style="top:44px">2 - <span style="letter-spacing:0.5px">CAM</span></div>
<div class="ln" style="top:62px">3 - <span style="letter-spacing:-0.3px;word-spacing:-0.8px">FP HIGH</span></div>
<div class="ln" style="top:80px">4 - <span style="letter-spacing:-0.1px">COMPRESSIA</span></div>
<div class="ln" style="top:98px">5 - <span style="letter-spacing:-0.4px">INJECTOR</span></div>
<div class="ln" style="top:116px;left:4.5px;letter-spacing:-0.075px">OPEL ZAFIRA-C A20DTH / 2.0L CDTI</div>
<div id="close"><svg width="18" height="18" viewBox="0 0 18 18" style="position:absolute;left:0;top:0"><path d="M4.4 5.3L12.8 12.2M12.8 5.3L4.4 12.2" stroke="#3c4a66" stroke-width="4.2" stroke-linecap="round"/><path d="M4.4 5.3L12.8 12.2M12.8 5.3L4.4 12.2" stroke="#fff" stroke-width="2.5" stroke-linecap="round"/></svg></div>
</div>

<div id="ab"><div class="in"><div class="tb">A-B interval</div>
<div class="v" style="top:20px;left:3.4px;word-spacing:1px">T:778 ms</div>
<div class="v" style="top:47px;left:1px;word-spacing:1.5px">F:1.285 Hz</div>
</div></div>
</body></html>
